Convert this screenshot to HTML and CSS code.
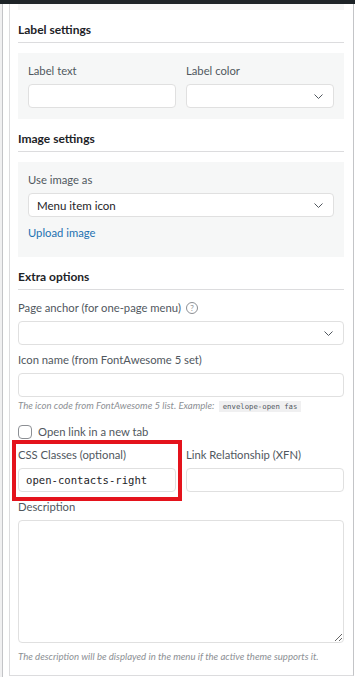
FILE: index.html
```html
<!DOCTYPE html>
<html lang="en">
<head>
  <meta charset="UTF-8" />
  <meta name="viewport" content="width=device-width, initial-scale=1.0" />
  <title>Menu item settings</title>
  <link rel="stylesheet" href="styles.css">
</head>

<body>
  <div class="topbar"></div>

  <div class="frame">
    <div class="panel">
      <div class="box box-tail"></div>

      <h3 class="section-title">Label settings</h3>
      <div class="box">
        <div class="cols">
          <div class="field">
            <label>Label text</label>
            <input type="text" class="input" />
          </div>
          <div class="field">
            <label>Label color</label>
            <div class="select">
              <span></span>
              <svg width="9" height="5" viewBox="0 0 9 5"><path d="M0.5 0.5l4 4 4-4" fill="none" stroke="#50575e" stroke-width="1"/></svg>
            </div>
          </div>
        </div>
      </div>

      <h3 class="section-title">Image settings</h3>
      <div class="box">
        <div class="field">
          <label>Use image as</label>
          <div class="select">
            <span>Menu item icon</span>
            <svg width="9" height="5" viewBox="0 0 9 5"><path d="M0.5 0.5l4 4 4-4" fill="none" stroke="#50575e" stroke-width="1"/></svg>
          </div>
        </div>
        <a href="#" class="link">Upload image</a>
      </div>

      <h3 class="section-title">Extra options</h3>

      <div class="field">
        <label>Page anchor (for one-page menu) <span class="help">?</span></label>
        <div class="select">
          <span></span>
          <svg width="9" height="5" viewBox="0 0 9 5"><path d="M0.5 0.5l4 4 4-4" fill="none" stroke="#50575e" stroke-width="1"/></svg>
        </div>
      </div>

      <div class="field">
        <label>Icon name (from FontAwesome 5 set)</label>
        <input type="text" class="input" />
        <p class="hint">The icon code from FontAwesome 5 list. Example: <code>envelope-open fas</code></p>
      </div>

      <label class="check">
        <span class="checkbox"></span>
        Open link in a new tab
      </label>

      <div class="cols">
        <div class="field marked">
          <label>CSS Classes (optional)</label>
          <input type="text" class="input mono" value="open-contacts-right" />
          <div class="highlight"></div>
        </div>
        <div class="field">
          <label>Link Relationship (XFN)</label>
          <input type="text" class="input" />
        </div>
      </div>

      <div class="field">
        <label>Description</label>
        <textarea class="textarea"></textarea>
        <p class="hint hint-wide">The description will be displayed in the menu if the active theme supports it.</p>
      </div>
    </div>
  </div>
</body>
</html>
```

FILE: styles.css
```css
* {
  box-sizing: border-box;
}

body {
  margin: 0;
  background: #f0f0f1;
  font-family: Lato, "Liberation Sans", sans-serif;
  font-size: 11.25px;
  color: #1d2327;
  height: 677px;
  overflow: hidden;
}

.topbar {
  height: 4px;
  background: #1d2327;
}

.frame {
  margin-left: 2px;
  padding-left: 6px;
  border-left: 1px solid #c3c4c7;
  background: #fff;
  height: 673px;
}

.panel {
  width: 345px;
  height: 672px;
  padding: 0 9px 0 8px;
  border-left: 1px solid #dcdcde;
  border-right: 1px solid #c3c4c7;
  border-bottom: 1px solid #dcdcde;
}

.box {
  background: #f6f7f7;
  padding: 10px 10px 11px;
}

.box-tail {
  height: 6px;
  padding: 0;
}

.section-title {
  margin: 10px 0;
  padding-bottom: 2px;
  font-size: 12px;
  font-weight: 700;
  line-height: 20px;
  color: #1d2327;
  border-bottom: 1px solid #dcdcde;
}

.cols {
  display: grid;
  grid-template-columns: 1fr 1fr;
  gap: 10px;
}

.field {
  display: flex;
  flex-direction: column;
  margin-bottom: 7px;
}

.box .field {
  margin-bottom: 0;
}

.field label {
  display: flex;
  align-items: center;
  gap: 5px;
  line-height: 16px;
  margin-bottom: 5px;
  color: #50575e;
}

.input,
.select,
.textarea {
  height: 24px;
  width: 100%;
  border: 1px solid #e0e0e0;
  border-radius: 4px;
  background: #fff;
  font-family: inherit;
  font-size: 11.5px;
  color: #1d2327;
}

.input {
  padding: 0 7px;
}

.select {
  display: flex;
  align-items: center;
  justify-content: space-between;
  padding: 0 10px 0 8px;
}

.mono {
  font-family: "DejaVu Sans Mono", "Liberation Mono", monospace;
  font-size: 10.6px;
  color: #1d2327;
}

.textarea {
  height: 123px;
  resize: vertical;
}

.link {
  display: block;
  margin: 8px 0 5px;
  line-height: 16px;
  color: #2271b1;
  text-decoration: none;
}

.help {
  width: 12px;
  height: 12px;
  border: 1px solid #8c8f94;
  border-radius: 50%;
  display: inline-flex;
  align-items: center;
  justify-content: center;
  font-size: 8px;
  color: #8c8f94;
}

.hint {
  margin: 2px 0 0;
  font-size: 9.6px;
  font-style: italic;
  line-height: 14px;
  color: #8c8f94;
}

.hint-wide {
  margin-top: 7px;
}

.hint code {
  font-family: "DejaVu Sans Mono", monospace;
  font-style: normal;
  font-size: 7.3px;
  background: #f0f0f1;
  color: #50575e;
  padding: 1px 4px;
  margin-left: 2px;
}

.check {
  display: flex;
  align-items: center;
  gap: 6px;
  margin: 10px 0 7px;
  line-height: 16px;
  color: #50575e;
}

.checkbox {
  width: 14px;
  height: 14px;
  border: 1px solid #8c8f94;
  border-radius: 4px;
  background: #fff;
}

.marked {
  position: relative;
}

.highlight {
  position: absolute;
  left: -6px;
  right: -6px;
  top: -7px;
  bottom: -9px;
  border: 4px solid #e4131c;
}
```
